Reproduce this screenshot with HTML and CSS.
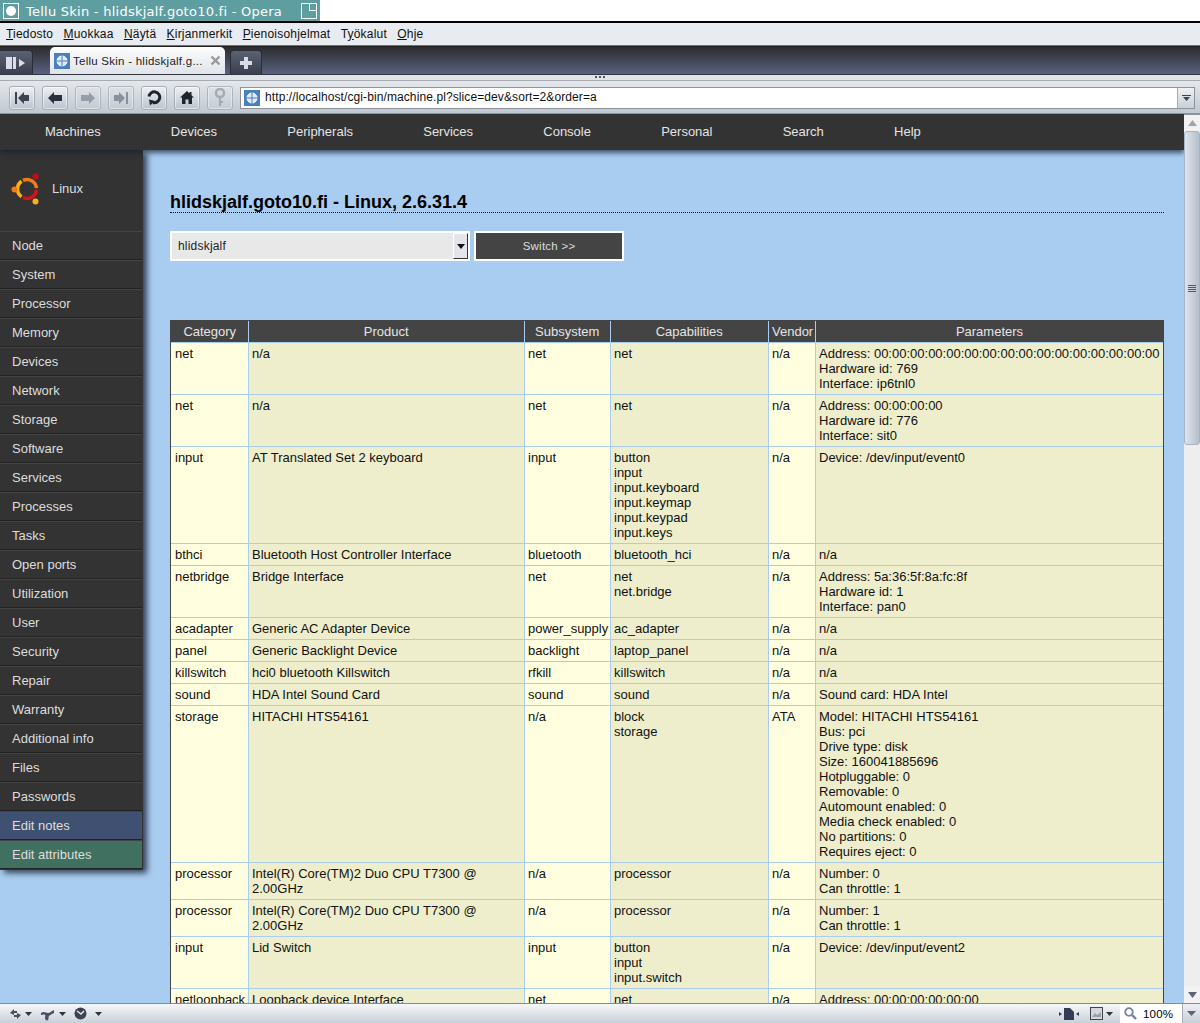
FILE: index.html
```html
<!DOCTYPE html>
<html lang="fi">
<head>
    <meta charset="UTF-8">
    <title>Tellu Skin - hlidskjalf.goto10.fi - Opera</title>
    <link rel="stylesheet" href="styles.css">
</head>
<body>
<div class="window">
    <!-- window manager title -->
    <div class="titlerow">
        <div class="titlebar">
            <span class="wm-btn"><i></i></span>
            <span class="wm-title">Tellu Skin - hlidskjalf.goto10.fi - Opera</span>
            <svg class="wm-max" width="16" height="16" viewBox="0 0 16 16"><path d="M.5 .5h15v15H.5zM8.5 .5v7h7" fill="none" stroke="#fff"/></svg>
        </div>
    </div>

    <div class="menubar">
        <span><u>T</u>iedosto</span><span><u>M</u>uokkaa</span><span><u>N</u>äytä</span><span><u>K</u>irjanmerkit</span><span><u>P</u>ienoisohjelmat</span><span>T<u>y</u>ökalut</span><span><u>O</u>hje</span>
    </div>

    <div class="tabbar">
        <div class="tab-side">
            <svg width="20" height="14" viewBox="0 0 20 14"><rect x="0" y="1" width="6" height="12" fill="#dde"/><rect x="7" y="1" width="3" height="12" fill="#dde"/><path d="M13 3l6 4-6 4z" fill="#dde"/></svg>
        </div>
        <div class="tab">
            <svg class="globe" width="16" height="16" viewBox="0 0 16 16"><rect width="16" height="16" fill="#4a7fc0"/><circle cx="8" cy="8" r="5" fill="#dfeaf6" stroke="#fff"/><path d="M8 2v12M2 8h12" stroke="#4a7fc0"/></svg>
            <span class="tab-label">Tellu Skin - hlidskjalf.g...</span>
            <svg width="11" height="11" viewBox="0 0 11 11"><path d="M1.500 1.500l8 8M9.500 1.500l-8 8" stroke="#9a9a9a" stroke-width="2.400"/></svg>
        </div>
        <div class="tab-new">
            <svg width="14" height="14" viewBox="0 0 14 14"><path d="M7 1v12M1 7h12" stroke="#d8dce4" stroke-width="4"/></svg>
        </div>
    </div>
    <div class="grip"><i></i><i></i><i></i></div>

    <div class="toolbar">
        <div class="tool"><svg width="16" height="14" viewBox="0 0 16 14"><path d="M1 1h2v12H1zM4 7l6-6v3h5v6h-5v3z" fill="#3c4454"/></svg></div>
        <div class="tool"><svg width="16" height="12" viewBox="0 0 16 12"><path d="M1 6l6-6v3h8v6H7v3z" fill="#2a303c"/></svg></div>
        <div class="tool off"><svg width="16" height="12" viewBox="0 0 16 12"><path d="M15 6L9 0v3H1v6h8v3z" fill="#8a909c"/></svg></div>
        <div class="tool off"><svg width="16" height="14" viewBox="0 0 16 14"><path d="M15 1h-2v12h2zM12 7L6 1v3H1v6h5v3z" fill="#7a808c"/></svg></div>
        <div class="tool"><svg width="16" height="16" viewBox="0 0 16 16"><path d="M3 6.500a5.400 5.400 0 1 1 4 6" fill="none" stroke="#20242c" stroke-width="3"/><path d="M3 9.500l6 1.500-5 4.500z" fill="#20242c"/></svg></div>
        <div class="tool"><svg width="14" height="13" viewBox="0 0 14 13"><path d="M7 0L0 6.500h2V13h3.500V8.500h3V13H12V6.500h2l-2.500-2.300V1h-2v1.400z" fill="#20242c"/></svg></div>
        <div class="tool off"><svg width="12" height="20" viewBox="0 0 12 20"><circle cx="6" cy="5" r="4" fill="none" stroke="#9aa0aa" stroke-width="2.500"/><path d="M5 9h2v9H5zM7 13h2v2H7z" fill="#9aa0aa"/></svg></div>
        <div class="address">
            <svg class="globe" width="16" height="16" viewBox="0 0 16 16"><rect width="16" height="16" fill="#4a7fc0"/><circle cx="8" cy="8" r="5" fill="#dfeaf6" stroke="#fff"/><path d="M8 2v12M2 8h12" stroke="#4a7fc0"/></svg>
            <span class="url">http://localhost/cgi-bin/machine.pl?slice=dev&amp;sort=2&amp;order=a</span>
            <span class="address-drop"><svg width="9" height="6" viewBox="0 0 9 6"><path d="M0 0h9v1H0zM1 2h7L4.500 6z" fill="#3c4454"/></svg></span>
        </div>
    </div>

    <div class="viewport">
        <div class="page">
            <div class="topnav">
                <a>Machines</a><a>Devices</a><a>Peripherals</a><a>Services</a><a>Console</a><a>Personal</a><a>Search</a><a>Help</a>
            </div>
            <div class="main">
                <div class="sidebar">
                    <div class="os">
                        <svg width="32" height="32" viewBox="0 0 32 32">
                            <g fill="none" stroke-width="3.500">
                                <path d="M12.990 7.390A9.500 9.500 0 0 1 26.460 15.170" stroke="#f47a14"/>
                                <path d="M11.550 8.220A9.500 9.500 0 0 0 11.550 23.780" stroke="#fbb116"/>
                                <path d="M12.990 24.610A9.500 9.500 0 0 0 26.460 16.830" stroke="#d8101c"/>
                            </g>
                            <circle cx="4.500" cy="16.500" r="3" fill="#f47a14"/>
                            <circle cx="25.500" cy="3.500" r="3" fill="#c80a18"/>
                            <circle cx="25.500" cy="28.500" r="3" fill="#fbb116"/>
                        </svg>
                        <span>Linux</span>
                    </div>
                    <a class="side-item">Node</a>
                    <a class="side-item">System</a>
                    <a class="side-item">Processor</a>
                    <a class="side-item">Memory</a>
                    <a class="side-item">Devices</a>
                    <a class="side-item">Network</a>
                    <a class="side-item">Storage</a>
                    <a class="side-item">Software</a>
                    <a class="side-item">Services</a>
                    <a class="side-item">Processes</a>
                    <a class="side-item">Tasks</a>
                    <a class="side-item">Open ports</a>
                    <a class="side-item">Utilization</a>
                    <a class="side-item">User</a>
                    <a class="side-item">Security</a>
                    <a class="side-item">Repair</a>
                    <a class="side-item">Warranty</a>
                    <a class="side-item">Additional info</a>
                    <a class="side-item">Files</a>
                    <a class="side-item">Passwords</a>
                    <a class="side-item notes">Edit notes</a>
                    <a class="side-item attrs">Edit attributes</a>
                </div>
                <div class="content">
                    <h1>hlidskjalf.goto10.fi - Linux, 2.6.31.4</h1>
                    <form class="switcher">
                        <div class="select">
                            <span>hlidskjalf</span>
                            <span class="select-arrow"><svg width="8" height="5" viewBox="0 0 8 5"><path d="M0 0h8L4 5z" fill="#111"/></svg></span>
                        </div>
                        <button type="button">Switch &gt;&gt;</button>
                    </form>
                    <div class="devices">
                        <table>
                            <colgroup>
                                <col class="c-cat"><col class="c-prod"><col class="c-sub"><col class="c-cap"><col class="c-ven"><col class="c-par">
                            </colgroup>
                            <tr><th>Category</th><th>Product</th><th>Subsystem</th><th>Capabilities</th><th>Vendor</th><th>Parameters</th></tr>
                            <tr><td>net</td><td>n/a</td><td>net</td><td>net</td><td>n/a</td><td>Address: 00:00:00:00:00:00:00:00:00:00:00:00:00:00:00:00<br>Hardware id: 769<br>Interface: ip6tnl0</td></tr>
                            <tr><td>net</td><td>n/a</td><td>net</td><td>net</td><td>n/a</td><td>Address: 00:00:00:00<br>Hardware id: 776<br>Interface: sit0</td></tr>
                            <tr><td>input</td><td>AT Translated Set 2 keyboard</td><td>input</td><td>button<br>input<br>input.keyboard<br>input.keymap<br>input.keypad<br>input.keys</td><td>n/a</td><td>Device: /dev/input/event0</td></tr>
                            <tr><td>bthci</td><td>Bluetooth Host Controller Interface</td><td>bluetooth</td><td>bluetooth_hci</td><td>n/a</td><td>n/a</td></tr>
                            <tr><td>netbridge</td><td>Bridge Interface</td><td>net</td><td>net<br>net.bridge</td><td>n/a</td><td>Address: 5a:36:5f:8a:fc:8f<br>Hardware id: 1<br>Interface: pan0</td></tr>
                            <tr><td>acadapter</td><td>Generic AC Adapter Device</td><td>power_supply</td><td>ac_adapter</td><td>n/a</td><td>n/a</td></tr>
                            <tr><td>panel</td><td>Generic Backlight Device</td><td>backlight</td><td>laptop_panel</td><td>n/a</td><td>n/a</td></tr>
                            <tr><td>killswitch</td><td>hci0 bluetooth Killswitch</td><td>rfkill</td><td>killswitch</td><td>n/a</td><td>n/a</td></tr>
                            <tr><td>sound</td><td>HDA Intel Sound Card</td><td>sound</td><td>sound</td><td>n/a</td><td>Sound card: HDA Intel</td></tr>
                            <tr><td>storage</td><td>HITACHI HTS54161</td><td>n/a</td><td>block<br>storage</td><td>ATA</td><td>Model: HITACHI HTS54161<br>Bus: pci<br>Drive type: disk<br>Size: 160041885696<br>Hotpluggable: 0<br>Removable: 0<br>Automount enabled: 0<br>Media check enabled: 0<br>No partitions: 0<br>Requires eject: 0</td></tr>
                            <tr><td>processor</td><td>Intel(R) Core(TM)2 Duo CPU T7300 @ 2.00GHz</td><td>n/a</td><td>processor</td><td>n/a</td><td>Number: 0<br>Can throttle: 1</td></tr>
                            <tr><td>processor</td><td>Intel(R) Core(TM)2 Duo CPU T7300 @ 2.00GHz</td><td>n/a</td><td>processor</td><td>n/a</td><td>Number: 1<br>Can throttle: 1</td></tr>
                            <tr><td>input</td><td>Lid Switch</td><td>input</td><td>button<br>input<br>input.switch</td><td>n/a</td><td>Device: /dev/input/event2</td></tr>
                            <tr><td>netloopback</td><td>Loopback device Interface</td><td>net</td><td>net</td><td>n/a</td><td>Address: 00:00:00:00:00:00</td></tr>
                        </table>
                    </div>
                </div>
            </div>
        </div>
        <div class="scrollbar">
            <div class="sb-btn"><svg width="9" height="6" viewBox="0 0 9 6"><path d="M4.500 0L9 6H0z" fill="#a0a4b0"/></svg></div>
            <div class="sb-thumb"><i></i><i></i><i></i><i></i></div>
            <div class="sb-track"></div>
            <div class="sb-btn"><svg width="9" height="6" viewBox="0 0 9 6"><path d="M0 0h9L4.500 6z" fill="#5c6478"/></svg></div>
        </div>
    </div>

    <div class="statusbar">
        <div class="status-left">
            <svg width="13" height="12" viewBox="0 0 13 12"><path d="M1 5l4-4v2h3v2H5v2zM12 7l-4 4V9H5V7h3V5z" fill="#4a5060"/></svg>
            <svg class="caret" width="7" height="4" viewBox="0 0 7 4"><path d="M0 0h7L3.500 4z" fill="#30343c"/></svg>
            <svg class="gap" width="16" height="14" viewBox="0 0 16 14"><path d="M1 6c3-2 5 0 7 0s3-2 6-3v3c-2 1-4 2-5 3s0 3-1 4-3 0-3-2 1-2 0-3-2 0-4 0z" fill="#4a5060"/></svg>
            <svg class="caret" width="7" height="4" viewBox="0 0 7 4"><path d="M0 0h7L3.500 4z" fill="#30343c"/></svg>
            <svg class="gap" width="13" height="13" viewBox="0 0 13 13"><circle cx="6.500" cy="6.500" r="6" fill="#3c4250"/><path d="M3 4l4 3 3-3" stroke="#e4e8ec" stroke-width="1.500" fill="none"/></svg>
            <svg class="caret wide" width="7" height="4" viewBox="0 0 7 4"><path d="M0 0h7L3.500 4z" fill="#30343c"/></svg>
        </div>
        <div class="status-right">
            <svg width="20" height="12" viewBox="0 0 20 12"><path d="M0 4l3 2-3 2zM20 4l-3 2 3 2zM5 0h6l4 4v8H5z" fill="#343c54"/></svg>
            <svg class="gap" width="13" height="13" viewBox="0 0 13 13"><rect x=".5" y=".5" width="12" height="12" fill="#d4d8dc" stroke="#40444c"/><path d="M2 10l3-4 2 2 4-3v5z" fill="#9aa0a8"/></svg>
            <svg class="caret" width="7" height="4" viewBox="0 0 7 4"><path d="M0 0h7L3.500 4z" fill="#30343c"/></svg>
            <div class="zoom">
                <svg width="13" height="13" viewBox="0 0 13 13"><circle cx="5" cy="5" r="3.800" fill="none" stroke="#7a8496" stroke-width="1.800"/><path d="M8 8l4 4" stroke="#7a8496" stroke-width="2.400"/></svg>
                <span>100%</span>
                <span class="zoom-drop"><svg width="9" height="5" viewBox="0 0 9 5"><path d="M0 0h9L4.500 5z" fill="#5c6478"/></svg></span>
            </div>
        </div>
    </div>
</div>
</body>
</html>
```

FILE: styles.css
```css
html, body {
    margin: 0;
    padding: 0;
    background-color: #fff;
}

.window {
    display: flex;
    flex-direction: column;
    width: 1200px;
    height: 1023px;
    overflow: hidden;
    font-family: "Liberation Sans", Arial, sans-serif;
    font-size: 13px;
}

/* window manager */
.titlerow {
    height: 21px;
    flex: none;
    border-bottom: 2px solid #000;
    background-color: #fff;
}

.titlebar {
    display: flex;
    align-items: center;
    width: 320px;
    height: 21px;
    background-color: #5f9ea0;
    color: #fff;
    font-family: "DejaVu Sans", sans-serif;
    font-size: 13px;
    letter-spacing: 0.25px;
}

.wm-btn {
    display: flex;
    align-items: center;
    justify-content: center;
    width: 14px;
    height: 14px;
    margin-left: 3px;
    border: 1px solid #fff;
}

.wm-btn i {
    width: 10px;
    height: 10px;
    border-radius: 50%;
    background-color: #fff;
}

.wm-title {
    margin-left: 7px;
    padding-top: 1px;
    flex: 1;
    white-space: nowrap;
}

.wm-max {
    margin-right: 3px;
}

/* opera chrome */
.menubar {
    display: flex;
    flex: none;
    align-items: center;
    gap: 10.3px;
    height: 22px;
    padding-left: 6px;
    background-color: #e8ecf0;
    border-bottom: 1px solid #707070;
    font-size: 12px;
    letter-spacing: 0.2px;
    color: #111;
}

.tabbar {
    display: flex;
    flex: none;
    align-items: flex-end;
    height: 29px;
    background: linear-gradient(#2c2c2e, #5a6180);
    border-top: 1px solid #222;
    border-bottom: 1px solid #33363f;
    box-sizing: border-box;
}

.tab-side, .tab-new {
    display: flex;
    align-items: center;
    justify-content: center;
    height: 24px;
    background: linear-gradient(#5c6272, #3a3f50);
    border: 1px solid #2a2d38;
    border-bottom: none;
    border-radius: 4px 4px 0 0;
    box-sizing: border-box;
}

.tab-side {
    width: 33px;
    border-left: none;
    border-radius: 0 4px 0 0;
}

.tab-new {
    width: 32px;
    margin-left: 5px;
}

.tab {
    display: flex;
    align-items: center;
    width: 175px;
    height: 27px;
    margin-left: 17px;
    padding: 0 4px 0 4px;
    box-sizing: border-box;
    background: linear-gradient(#fdfdfd, #dfe4ea);
    border-radius: 5px 5px 0 0;
    font-size: 11.5px;
    letter-spacing: 0.25px;
    color: #222;
}

.tab-label {
    flex: 1;
    margin-left: 3px;
    white-space: nowrap;
}

.grip {
    display: flex;
    flex: none;
    justify-content: center;
    gap: 2px;
    height: 6px;
    padding-top: 1px;
    box-sizing: border-box;
    background-color: #dfe4ea;
    border-bottom: 1px solid #a8acb2;
}

.grip i {
    width: 2px;
    height: 2px;
    background-color: #555;
}

.toolbar {
    display: flex;
    flex: none;
    align-items: center;
    gap: 7px;
    height: 33px;
    padding: 1px 5px 0 9px;
    box-sizing: border-box;
    background: linear-gradient(#e4e8ec, #c0c8d2);
    border-bottom: 1px solid #8e939a;
}

.tool {
    display: flex;
    align-items: center;
    justify-content: center;
    width: 26px;
    height: 24px;
    box-sizing: border-box;
    background: linear-gradient(#eef0f3, #bcc4ce);
    border: 1px solid #a8adb5;
    border-radius: 3px;
    box-shadow: inset 0 0 0 1px rgba(255, 255, 255, 0.5);
}

.tool.off {
    opacity: 0.8;
    background: linear-gradient(#dde1e6, #c4ccd4);
}

.address {
    display: flex;
    flex: 1;
    align-items: center;
    height: 22px;
    padding-left: 3px;
    box-sizing: border-box;
    background-color: #fff;
    border: 1px solid #8e9298;
}

.url {
    flex: 1;
    margin-left: 5px;
    padding-bottom: 1px;
    font-size: 12px;
    letter-spacing: 0.1px;
    color: #111;
}

.address-drop {
    display: flex;
    align-items: center;
    justify-content: center;
    width: 16px;
    height: 20px;
    background: linear-gradient(#eef0f3, #c8d0d8);
    border-left: 1px solid #a8adb5;
}

/* page area */
.viewport {
    display: flex;
    flex: 1;
    min-height: 0;
}

.page {
    flex: 1;
    min-width: 0;
    overflow: hidden;
    background-color: #a9cdf0;
    color: #000;
}

.topnav {
    position: relative;
    z-index: 2;
    display: flex;
    gap: 70.2px;
    align-items: center;
    height: 36px;
    padding: 0 0 1px 45px;
    box-sizing: border-box;
    background-color: #333;
    box-shadow: 0 3px 5px rgba(20, 30, 50, 0.7);
    color: #e4e4e4;
}

.main {
    display: flex;
    align-items: flex-start;
}

.sidebar {
    flex: none;
    width: 143px;
    padding-bottom: 1px;
    background-color: #333;
    box-shadow: 4px 3px 6px rgba(20, 30, 50, 0.8);
    color: #ddd;
}

.os {
    display: flex;
    align-items: center;
    gap: 10px;
    height: 81px;
    padding: 0 0 4px 10px;
    box-sizing: border-box;
}

.side-item {
    display: flex;
    align-items: center;
    height: 29px;
    padding-left: 12px;
    margin-right: 1px;
    box-sizing: border-box;
    border-top: 1px solid #444;
    border-bottom: 1px solid #222;
}

.side-item.notes {
    background-color: #3f5070;
}

.side-item.attrs {
    background-color: #3f7060;
}

.content {
    flex: 1;
    min-width: 0;
    padding: 43px 20px 0 27px;
}

h1 {
    margin: 0;
    height: 19px;
    border-bottom: 1px dotted #000;
    font-size: 18px;
    line-height: 19px;
    font-weight: bold;
    color: #000;
}

.switcher {
    display: flex;
    gap: 4px;
    margin-top: 18px;
}

.select {
    display: flex;
    align-items: center;
    justify-content: space-between;
    width: 300px;
    height: 30px;
    padding-left: 6px;
    box-sizing: border-box;
    background-color: #e8e8e8;
    border: 2px solid #fff;
    font-size: 12px;
    letter-spacing: 0.2px;
    color: #222;
}

.select-arrow {
    display: flex;
    align-items: center;
    justify-content: center;
    width: 15px;
    height: 26px;
    box-sizing: border-box;
    background-color: #e4e4ea;
    border: 1px solid #333;
    border-top-color: #fff;
    border-left-color: #fff;
}

.switcher button {
    width: 150px;
    height: 30px;
    padding: 0;
    background-color: #444;
    border: 2px solid #fff;
    font-family: "Liberation Sans", Arial, sans-serif;
    font-size: 11.5px;
    letter-spacing: 0.25px;
    color: #ddd;
}

.devices {
    width: 994px;
    height: 800px;
    margin-top: 59px;
    box-sizing: border-box;
    border: 1px solid #444;
    border-bottom: none;
}

table {
    width: 992px;
    table-layout: fixed;
    border-collapse: collapse;
    line-height: 15px;
    color: #111;
}

.c-cat { width: 77px; }
.c-prod { width: 276px; }
.c-sub { width: 86px; }
.c-cap { width: 158px; }
.c-ven { width: 47px; }
.c-par { width: 348px; }

th, td {
    padding: 3px 3px 3px 3.5px;
    border: 1px solid #a9cdf0;
    vertical-align: top;
}

th:first-child, td:first-child {
    padding-left: 4px;
    border-left: none;
}

th {
    background-color: #444;
    font-weight: normal;
    text-align: center;
    color: #e4e4e4;
}

td:nth-child(odd) {
    background-color: #ffffe0;
}

td:nth-child(even) {
    background-color: #eeeecc;
}

tr:first-child th {
    border-top: none;
}

th:last-child, td:last-child {
    border-right: none;
}

/* scrollbar */
.scrollbar {
    display: flex;
    flex: none;
    flex-direction: column;
    width: 16px;
    background-color: #eee;
    border-top: 1px solid #8e939a;
}

.sb-btn {
    display: flex;
    flex: none;
    align-items: center;
    justify-content: center;
    height: 16px;
    background-color: #f2f2f2;
}

.sb-thumb {
    display: flex;
    flex: none;
    flex-direction: column;
    align-items: center;
    justify-content: center;
    gap: 1px;
    height: 314px;
    box-sizing: border-box;
    background: linear-gradient(90deg, #dfe4ea, #b4bfcc);
    border: 1px solid #a6b4c8;
    border-radius: 3px;
}

.sb-thumb i {
    width: 8px;
    height: 1px;
    background-color: #50586a;
}

.sb-track {
    flex: 1;
}

.statusbar {
    display: flex;
    flex: none;
    align-items: center;
    justify-content: space-between;
    height: 20px;
    box-sizing: border-box;
    background: linear-gradient(#f6f8fa, #c8d0d8);
    border-top: 1px solid #8a8a8a;
}

.status-left, .status-right {
    display: flex;
    align-items: center;
}

.status-left {
    padding-left: 9px;
}

.caret {
    margin-left: 3px;
}

.caret.wide {
    margin-left: 8px;
}

.gap {
    margin-left: 8px;
}

.status-right .gap {
    margin-left: 11px;
}

.zoom {
    display: flex;
    align-items: center;
    width: 80px;
    height: 19px;
    margin-left: 7px;
    padding-left: 4px;
    box-sizing: border-box;
    background-color: #fff;
    font-size: 11.5px;
    letter-spacing: 0.2px;
}

.zoom span:first-of-type {
    margin-left: 6px;
    flex: 1;
}

.zoom-drop {
    display: flex;
    align-items: center;
    justify-content: center;
    width: 17px;
    height: 19px;
    background: linear-gradient(#eef0f3, #c8d0d8);
    border-left: 1px solid #a8adb5;
}
```
